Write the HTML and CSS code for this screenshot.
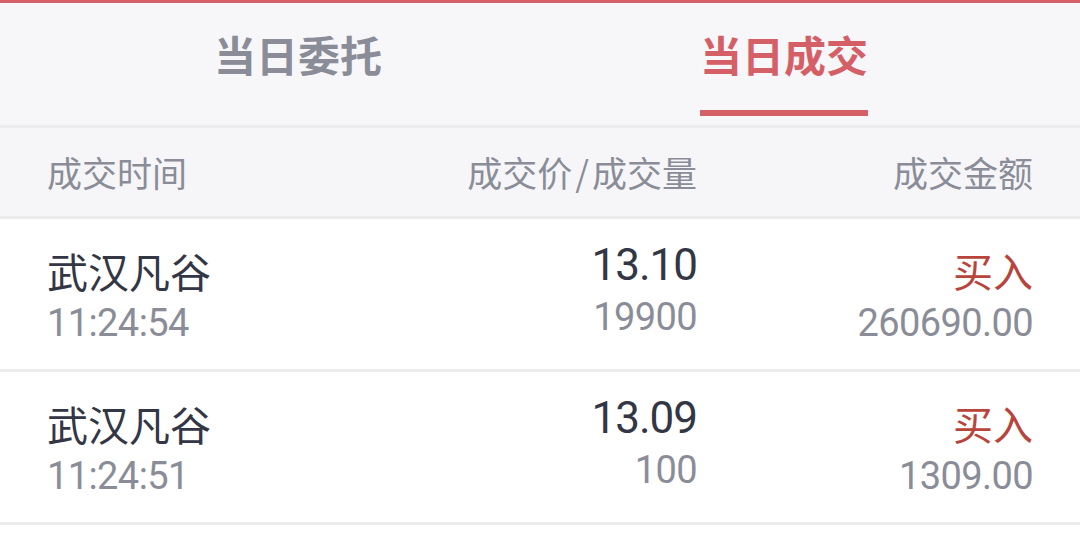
FILE: index.html
```html
<!DOCTYPE html>
<html lang="zh">
	<head>
		<meta charset="UTF-8">
		<meta name="viewport" content="width=device-width, initial-scale=1.0">
		<title>当日成交</title>
		<link rel="stylesheet" href="styles.css">
	</head>
	<body>
		<div class="topline"></div>
		<div class="tabs">
			<a class="tab" href="javascript:;">当日委托</a>
			<a class="tab active" href="javascript:;">当日成交</a>
		</div>
		<div class="head">
			<span>成交时间</span>
			<span class="r">成交价<i class="slash">/</i>成交量</span>
			<span class="r">成交金额</span>
		</div>
		<ul class="list">
			<li class="row">
				<div class="cell">
					<p class="name">武汉凡谷</p>
					<p class="sub">11:24:54</p>
				</div>
				<div class="cell r mid">
					<p class="price">13.10</p>
					<p class="sub">19900</p>
				</div>
				<div class="cell r">
					<p class="buy">买入</p>
					<p class="sub">260690.00</p>
				</div>
			</li>
			<li class="row">
				<div class="cell">
					<p class="name">武汉凡谷</p>
					<p class="sub">11:24:51</p>
				</div>
				<div class="cell r mid">
					<p class="price">13.09</p>
					<p class="sub">100</p>
				</div>
				<div class="cell r">
					<p class="buy">买入</p>
					<p class="sub">1309.00</p>
				</div>
			</li>
		</ul>
	</body>
</html>
```

FILE: styles.css
```css
* {
	margin: 0;
	padding: 0;
}

body {
	background-color: #fff;
	font-family: Roboto, "Noto Sans CJK SC", sans-serif;
	color: #333644;
}

.topline {
	height: 3px;
	background-color: #d6616a;
}

.tabs {
	display: flex;
	gap: 318px;
	padding: 0 0 9px 214px;
	background-color: #f7f7fa;
	border-bottom: 3px solid #ececee;
}

.tab {
	display: block;
	padding-top: 23px;
	padding-bottom: 28px;
	line-height: 56px;
	font-size: 42px;
	font-weight: bold;
	font-family: "Noto Sans CJK SC", sans-serif;
	color: #8a8d98;
	text-decoration: none;
	border-bottom: 6px solid transparent;
}

.tab.active {
	color: #d55f66;
	border-bottom-color: #d55f66;
}

.head,
.row {
	display: grid;
	grid-template-columns: 1fr 336px 336px;
	padding: 0 47px;
}

.head {
	height: 88px;
	line-height: 88px;
	background-color: #f6f6f9;
	border-bottom: 3px solid #ececee;
	font-family: "Noto Sans CJK SC", sans-serif;
	font-size: 35px;
	color: #8a8d98;
}

.slash {
	font-style: normal;
	padding: 0 3px;
}

.r {
	text-align: right;
}

.list {
	list-style: none;
}

.row {
	box-sizing: border-box;
	height: 153px;
	padding-top: 27px;
	border-bottom: 3px solid #ececee;
}

.cell {
	display: flex;
	flex-direction: column;
	gap: 9px;
}

.cell.mid {
	margin-top: -3px;
	gap: 10px;
}

.name,
.buy {
	font-family: "Noto Sans CJK SC", sans-serif;
	font-size: 41px;
	line-height: 48px;
}

.buy {
	font-size: 40px;
	color: #b9443c;
}

.price {
	font-size: 44px;
	line-height: 44px;
	letter-spacing: -1px;
	color: #333644;
}

.sub {
	font-size: 38px;
	line-height: 40px;
	letter-spacing: -0.6px;
	color: #8a8d98;
}
```
